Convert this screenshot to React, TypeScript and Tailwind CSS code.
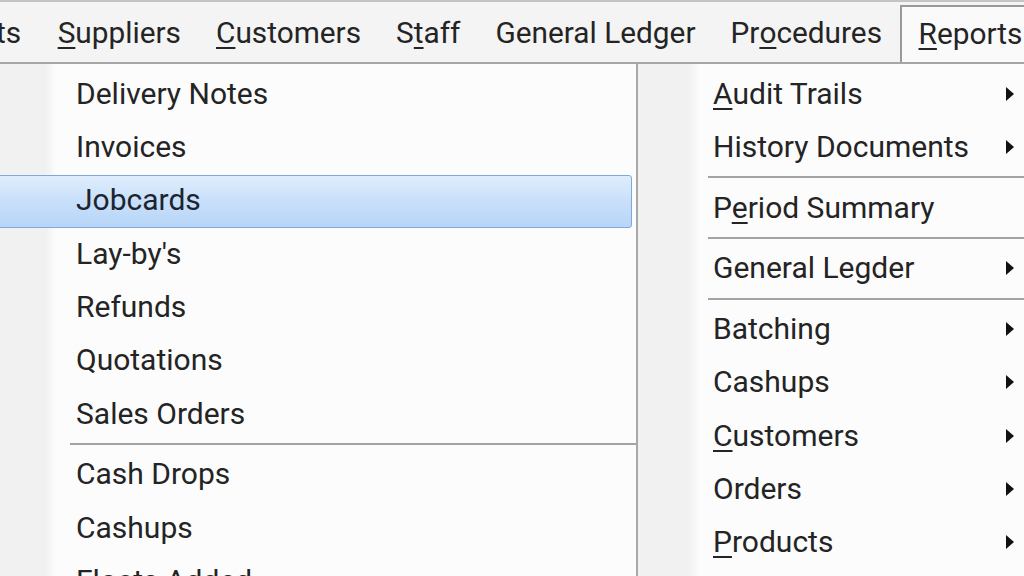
import React from "react";

const U = ({ children }: { children: React.ReactNode }) => (
  <span className="underline decoration-[2px] underline-offset-[4px]">{children}</span>
);

const Arrow = () => (
  <svg width="10" height="14" viewBox="0 0 10 14" className="shrink-0">
    <polygon points="1,0 9,7 1,14" fill="#111" />
  </svg>
);

const Sep = () => (
  <div className="h-[7.33px] shrink-0 flex flex-col justify-center pl-[70px]">
    <div className="h-[2px] bg-[#a3a3a3]" />
  </div>
);

type Item = { label: React.ReactNode; arrow?: boolean; hl?: boolean } | "sep";

const leftItems: Item[] = [
  { label: "Delivery Notes" },
  { label: "Invoices" },
  { label: "Jobcards", hl: true },
  { label: "Lay-by's" },
  { label: "Refunds" },
  { label: "Quotations" },
  { label: "Sales Orders" },
  "sep",
  { label: "Cash Drops" },
  { label: "Cashups" },
  { label: "Floats Added" },
];

const rightItems: Item[] = [
  { label: <><U>A</U>udit Trails</>, arrow: true },
  { label: "History Documents", arrow: true },
  "sep",
  { label: <>P<U>e</U>riod Summary</> },
  "sep",
  { label: "General Legder", arrow: true },
  "sep",
  { label: "Batching", arrow: true },
  { label: "Cashups", arrow: true },
  { label: <><U>C</U>ustomers</>, arrow: true },
  { label: "Orders", arrow: true },
  { label: <><U>P</U>roducts</>, arrow: true },
];

function Rows({ items, pl }: { items: Item[]; pl: "left" | "right" }) {
  return (
    <>
      {items.map((it, i) => {
        if (it === "sep") return <Sep key={i} />;
        return (
          <div
            key={i}
            className={
              "relative h-[53.33px] shrink-0 flex items-center " +
              (pl === "left" ? "pl-[76px] pr-[12px]" : "pl-[75px] pr-[9px]")
            }
          >
            {it.hl && (
              <div className="absolute top-[1.5px] bottom-[-1.5px] left-[-6px] right-[4px] rounded-[3px] border border-[#80a8d8] bg-[linear-gradient(to_bottom,#dfedfc,#c6defa_55%,#b7d5f7)]" />
            )}
            <span className={"relative flex-1 whitespace-nowrap leading-none " + (it.hl ? "text-[#1c2430]" : "")}>{it.label}</span>
            {it.arrow && <Arrow />}
          </div>
        );
      })}
    </>
  );
}

const MenuItem = ({ children, active, className = "" }: { children: React.ReactNode; active?: boolean; className?: string }) => (
  <div
    className={
      "flex items-center whitespace-nowrap " +
      (active ? "mt-[3px] border-l-2 border-t-2 border-[#999] bg-[#fafafa] pl-[17px] " : "px-[17.5px] pt-[2px] ") +
      className
    }
  >
    {children}
  </div>
);

export default function App() {
  return (
    <div className="w-[1024px] h-[576px] overflow-hidden bg-[#fcfcfc] flex flex-col font-['Roboto',_'Liberation_Sans',_sans-serif] text-[30px] text-[#242424]">
      <header className="h-[64px] shrink-0 flex items-stretch bg-[#f4f4f4] border-t-[2px] border-t-[#c4c4c4] border-b-2 border-b-[#a6a6a6] text-[29.8px]">
        <div className="flex items-center ml-[-4px] pr-[19px] pt-[2px] whitespace-nowrap">ts</div>
        <MenuItem><U>S</U>uppliers</MenuItem>
        <MenuItem><U>C</U>ustomers</MenuItem>
        <MenuItem>S<U>t</U>aff</MenuItem>
        <MenuItem>General Ledger</MenuItem>
        <MenuItem>Pr<U>o</U>cedures</MenuItem>
        <MenuItem active className="flex-1"><U>R</U>eports</MenuItem>
      </header>
      <div className="flex flex-1 min-h-0">
        <div className="w-[638px] shrink-0 overflow-hidden border-r-2 border-r-[#a8a8a8] pt-[3px] flex flex-col bg-[linear-gradient(to_right,#f1f1f1_0px,#f1f1f1_46px,#fcfcfc_56px)]">
          <Rows items={leftItems} pl="left" />
        </div>
        <div className="flex-1 min-w-0 overflow-hidden pt-[3px] flex flex-col bg-[linear-gradient(to_right,#f1f1f1_0px,#f1f1f1_50px,#fcfcfc_62px)]">
          <Rows items={rightItems} pl="right" />
        </div>
      </div>
    </div>
  );
}
